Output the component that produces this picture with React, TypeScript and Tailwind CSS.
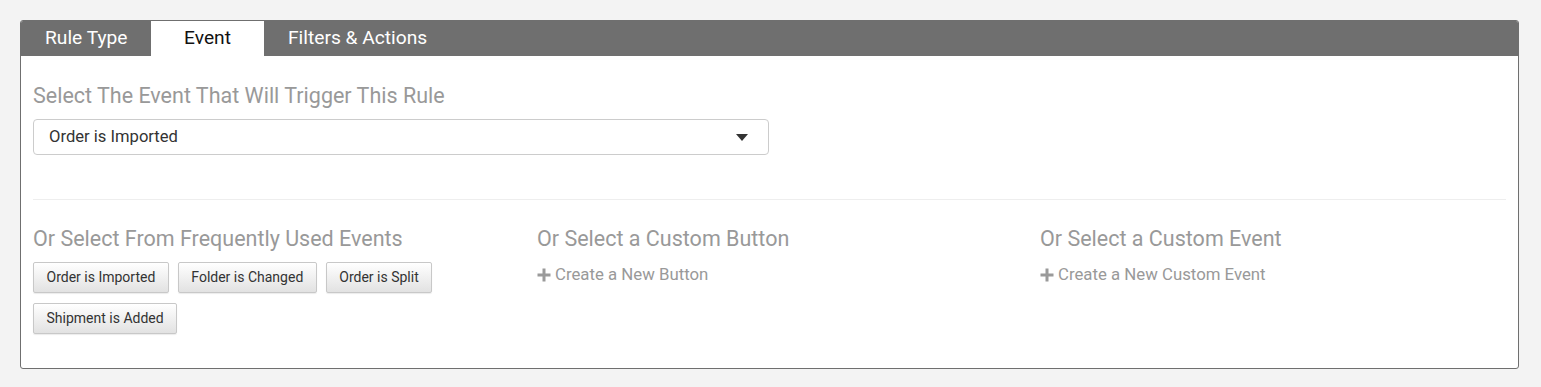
import React from "react";

const Plus = () => (
  <svg width="14" height="14" viewBox="0 0 14 14" className="inline-block mr-[4px] -mt-[2px]">
    <rect x="5.5" y="0.5" width="3" height="13" fill="#9a9a9a" />
    <rect x="0.5" y="5.5" width="13" height="3" fill="#9a9a9a" />
  </svg>
);

const Btn = ({ children }: { children: React.ReactNode }) => (
  <button className="h-[31px] px-[12.5px] text-[14px] text-[#333] border border-[#c8c8c8] rounded-[2px] bg-gradient-to-b from-white to-[#e2e2e2] shadow-[0_1px_1px_rgba(0,0,0,0.08)]">
    {children}
  </button>
);

export default function App() {
  return (
    <div className="min-h-[387px] bg-[#f3f3f3] pt-[20px] pl-[20px]" style={{ fontFamily: "Roboto, 'Liberation Sans', sans-serif" }}>
      <div className="w-[1499px] border border-[#6f6f6f] rounded-[3px] bg-white overflow-hidden">
        <div className="flex h-[36px] bg-[#6f6f6f] text-[19.2px] -mt-px">
          <div className="w-[130px] pl-[24px] pt-px flex items-center text-white">Rule Type</div>
          <div className="w-[113px] pt-px flex items-center justify-center bg-white text-[#111]">Event</div>
          <div className="pl-[24px] pt-px flex items-center text-white">Filters &amp; Actions</div>
        </div>
        <div className="px-[12px] pt-[28px] pb-[34px]">
          <div className="text-[21.5px] leading-[23px] text-[#999]">Select The Event That Will Trigger This Rule</div>
          <div className="mt-[12px] w-[736px] h-[36px] border border-[#ccc] rounded-[4px] flex items-center justify-between pl-[15px] pr-[20px] text-[16.6px] text-[#333]">
            <span>Order is Imported</span>
            <svg width="12" height="7" viewBox="0 0 12 7"><path d="M0 0H12L6 7Z" fill="#333" /></svg>
          </div>
          <div className="mt-[44px] h-px bg-[#eee]" />
          <div className="mt-[27px] grid grid-cols-[504px_503px_1fr]">
            <div>
              <div className="text-[21.5px] leading-[23px] text-[#999]">Or Select From Frequently Used Events</div>
              <div className="mt-[12px] flex flex-wrap gap-x-[9px] gap-y-[10px] w-[420px]">
                <Btn>Order is Imported</Btn>
                <Btn>Folder is Changed</Btn>
                <Btn>Order is Split</Btn>
                <Btn>Shipment is Added</Btn>
              </div>
            </div>
            <div>
              <div className="text-[21.5px] leading-[23px] text-[#999]">Or Select a Custom Button</div>
              <div className="mt-[14px] text-[16.8px] leading-[20px] text-[#999]"><Plus />Create a New Button</div>
            </div>
            <div>
              <div className="text-[21.5px] leading-[23px] text-[#999]">Or Select a Custom Event</div>
              <div className="mt-[14px] text-[16.8px] leading-[20px] text-[#999]"><Plus />Create a New Custom Event</div>
            </div>
          </div>
        </div>
      </div>
    </div>
  );
}
